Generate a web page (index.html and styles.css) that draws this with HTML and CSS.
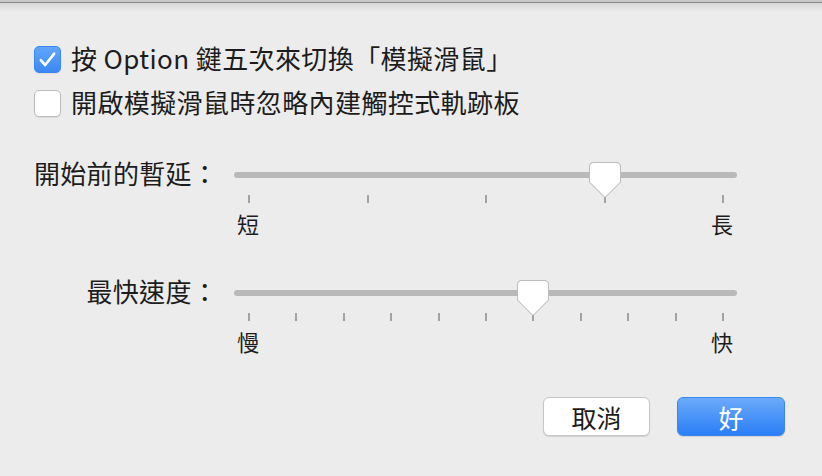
FILE: index.html
```html
<!DOCTYPE html>
<html lang="zh-Hant">
<head>
<meta charset="utf-8">
<title>模擬滑鼠選項</title>
<link rel="stylesheet" href="styles.css">
</head>
<body>
<div class="titlebar"></div>
<main class="sheet">
  <div class="checks">
    <label class="check-row">
      <span class="box checked"><svg viewBox="0 0 27 27" width="27" height="27"><path d="M6.8 14.2 L11.2 19 L20.2 7.6" fill="none" stroke="#fff" stroke-width="2.6" stroke-linecap="round" stroke-linejoin="round"/></svg></span>
      <span class="check-text">按 Option 鍵五次來切換「模擬滑鼠」</span>
    </label>
    <label class="check-row">
      <span class="box"></span>
      <span class="check-text">開啟模擬滑鼠時忽略內建觸控式軌跡板</span>
    </label>
  </div>

  <div class="slider-row first">
    <div class="slider-label">開始前的暫延：</div>
    <div class="slider">
      <div class="rail"></div>
      <div class="ticks"><i></i><i></i><i></i><i></i><i></i></div>
      <div class="ends"><span>短</span><span>長</span></div>
      <svg class="thumb" style="left:355px" viewBox="0 0 32 37" width="32" height="37"><path d="M5 0.5 H27 Q31.5 0.5 31.5 5 V20 L16 35.5 L0.5 20 V5 Q0.5 0.5 5 0.5 Z" fill="#fff" stroke="#bdbdbd" stroke-width="1"/></svg>
    </div>
  </div>

  <div class="slider-row second">
    <div class="slider-label">最快速度：</div>
    <div class="slider">
      <div class="rail"></div>
      <div class="ticks"><i></i><i></i><i></i><i></i><i></i><i></i><i></i><i></i><i></i><i></i><i></i></div>
      <div class="ends"><span>慢</span><span>快</span></div>
      <svg class="thumb" style="left:283px" viewBox="0 0 32 37" width="32" height="37"><path d="M5 0.5 H27 Q31.5 0.5 31.5 5 V20 L16 35.5 L0.5 20 V5 Q0.5 0.5 5 0.5 Z" fill="#fff" stroke="#bdbdbd" stroke-width="1"/></svg>
    </div>
  </div>

  <div class="buttons">
    <button class="btn">取消</button>
    <button class="btn primary">好</button>
  </div>
</main>
</body>
</html>
```
FILE: styles.css
```css
html, body {
  margin: 0;
  padding: 0;
}
body {
  background: #ececec;
  font-family: "Noto Sans CJK TC", "Noto Sans", sans-serif;
  color: #1c1c1c;
  width: 822px;
  height: 476px;
  overflow: hidden;
}
.titlebar {
  height: 12px;
  background: linear-gradient(to bottom,
    #c8c8c8 0px, #c8c8c8 2px,
    #888888 2px, #888888 3px,
    #d7d7d7 3px, #ececec 12px);
}
.sheet {
  padding: 33px 37px 0 34px;
}
.checks {
  display: flex;
  flex-direction: column;
  gap: 16px;
}
.check-row {
  display: flex;
  align-items: center;
  gap: 10px;
  height: 28px;
  font-size: 26px;
  line-height: 28px;
  letter-spacing: 0.4px;
}
.check-text {
  position: relative;
  top: -1px;
}
.box {
  box-sizing: border-box;
  width: 27px;
  height: 27px;
  border-radius: 5px;
  background: #fff;
  border: 1px solid #bcbcbc;
  box-shadow: 0 1px 1px rgba(0,0,0,0.08);
  display: block;
  flex: none;
}
.box svg {
  display: block;
  margin: -1px;
}
.box.checked {
  background: linear-gradient(#62a6fa, #3b88f5);
  border-color: #3b86ef;
}
.slider-row {
  display: grid;
  grid-template-columns: 184px 503px;
  column-gap: 16px;
  align-items: start;
}
.slider-row.first {
  margin-top: 45px;
}
.slider-row.second {
  margin-top: 46px;
}
.slider-label {
  font-size: 26px;
  line-height: 26px;
  letter-spacing: 0.3px;
  text-align: right;
  margin-top: -2px;
  white-space: nowrap;
}
.slider {
  position: relative;
  height: 72px;
}
.rail {
  margin-top: 10px;
  height: 6px;
  border-radius: 3px;
  background: #b9b9b9;
}
.ticks {
  display: flex;
  justify-content: space-between;
  padding: 0 13px 0 14px;
  margin-top: 17px;
  height: 8px;
}
.ticks i {
  display: block;
  width: 2px;
  height: 8px;
  background: #a2a2a2;
}
.ends {
  display: flex;
  justify-content: space-between;
  padding: 0 4px 0 3px;
  margin-top: 9px;
  font-size: 22px;
  line-height: 22px;
}
.thumb {
  position: absolute;
  top: 0;
  filter: drop-shadow(0 0.5px 0.6px rgba(0,0,0,0.18));
}
.buttons {
  display: flex;
  justify-content: flex-end;
  gap: 27px;
  margin-top: 45px;
}
.btn {
  box-sizing: border-box;
  height: 39px;
  width: 107px;
  padding: 0;
  border-radius: 6px;
  font-family: "Noto Sans CJK TC", "Noto Sans", sans-serif;
  font-size: 25px;
  line-height: 36px;
  color: #1c1c1c;
  background: #fff;
  border: 1px solid #c6c6c6;
  box-shadow: 0 1px 1px rgba(0,0,0,0.12);
}
.btn.primary {
  width: 108px;
  color: #fff;
  background: linear-gradient(#6caafa, #2a7ef6);
  border-color: #3a87f2;
}
```
